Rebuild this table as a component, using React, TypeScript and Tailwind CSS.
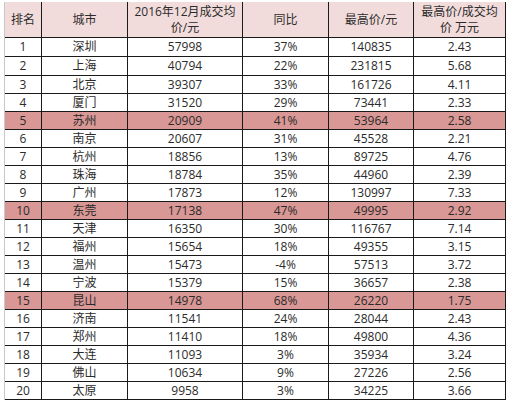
import React from "react";

const rows: [string, string, string, string, string, string][] = [
  ["1", "深圳", "57998", "37%", "140835", "2.43"],
  ["2", "上海", "40794", "22%", "231815", "5.68"],
  ["3", "北京", "39307", "33%", "161726", "4.11"],
  ["4", "厦门", "31520", "29%", "73441", "2.33"],
  ["5", "苏州", "20909", "41%", "53964", "2.58"],
  ["6", "南京", "20607", "31%", "45528", "2.21"],
  ["7", "杭州", "18856", "13%", "89725", "4.76"],
  ["8", "珠海", "18784", "35%", "44960", "2.39"],
  ["9", "广州", "17873", "12%", "130997", "7.33"],
  ["10", "东莞", "17138", "47%", "49995", "2.92"],
  ["11", "天津", "16350", "30%", "116767", "7.14"],
  ["12", "福州", "15654", "18%", "49355", "3.15"],
  ["13", "温州", "15473", "-4%", "57513", "3.72"],
  ["14", "宁波", "15379", "15%", "36657", "2.38"],
  ["15", "昆山", "14978", "68%", "26220", "1.75"],
  ["16", "济南", "11541", "24%", "28044", "2.43"],
  ["17", "郑州", "11410", "18%", "49800", "4.36"],
  ["18", "大连", "11093", "3%", "35934", "3.24"],
  ["19", "佛山", "10634", "9%", "27226", "2.56"],
  ["20", "太原", "9958", "3%", "34225", "3.66"],
];

const highlight = new Set(["5", "10", "15"]);

export default function App() {
  return (
    <div
      className="w-[510px] h-[404px] bg-white pt-[2px] pl-[4px] text-[#2b2b2b] text-[12px]"
      style={{ fontFamily: '"Open Sans", "Noto Sans CJK SC", sans-serif' }}
    >
      <div className="w-[502px] border-l border-[#c8c8c8]">
        <div className="grid grid-cols-[37px_86px_115px_86px_85px_92px] h-[36px] bg-[#f2dcdb] border-b border-[#1a1a1a]">
          <div className="border-r border-[#1a1a1a] flex items-center justify-center">排名</div>
          <div className="border-r border-[#1a1a1a] flex items-center justify-center">城市</div>
          <div className="border-r border-[#1a1a1a] flex flex-col items-center justify-center">
            <span className="block h-[16px] leading-[16px]">2016年12月成交均</span>
            <span className="block h-[16px] leading-[16px]">价/元</span>
          </div>
          <div className="border-r border-[#1a1a1a] flex items-center justify-center">同比</div>
          <div className="border-r border-[#1a1a1a] flex items-center justify-center">最高价/元</div>
          <div className="border-r border-[#1a1a1a] flex flex-col items-center justify-center">
            <span className="block h-[16px] leading-[16px]">最高价/成交均</span>
            <span className="block h-[16px] leading-[16px]">价 万元</span>
          </div>
        </div>
        {rows.map((r, i) => (
          <div
            key={r[0]}
            className={`grid grid-cols-[37px_86px_115px_86px_85px_92px] border-b border-[#1a1a1a] ${
              i < 2 ? "h-[19px]" : "h-[18px]"
            } ${highlight.has(r[0]) ? "bg-[#d99795]" : "bg-white"}`}
          >
            {r.map((c, j) => (
              <div
                key={j}
                className="border-r border-[#1a1a1a] flex items-center justify-center leading-none"
              >
                {c}
              </div>
            ))}
          </div>
        ))}
      </div>
    </div>
  );
}
